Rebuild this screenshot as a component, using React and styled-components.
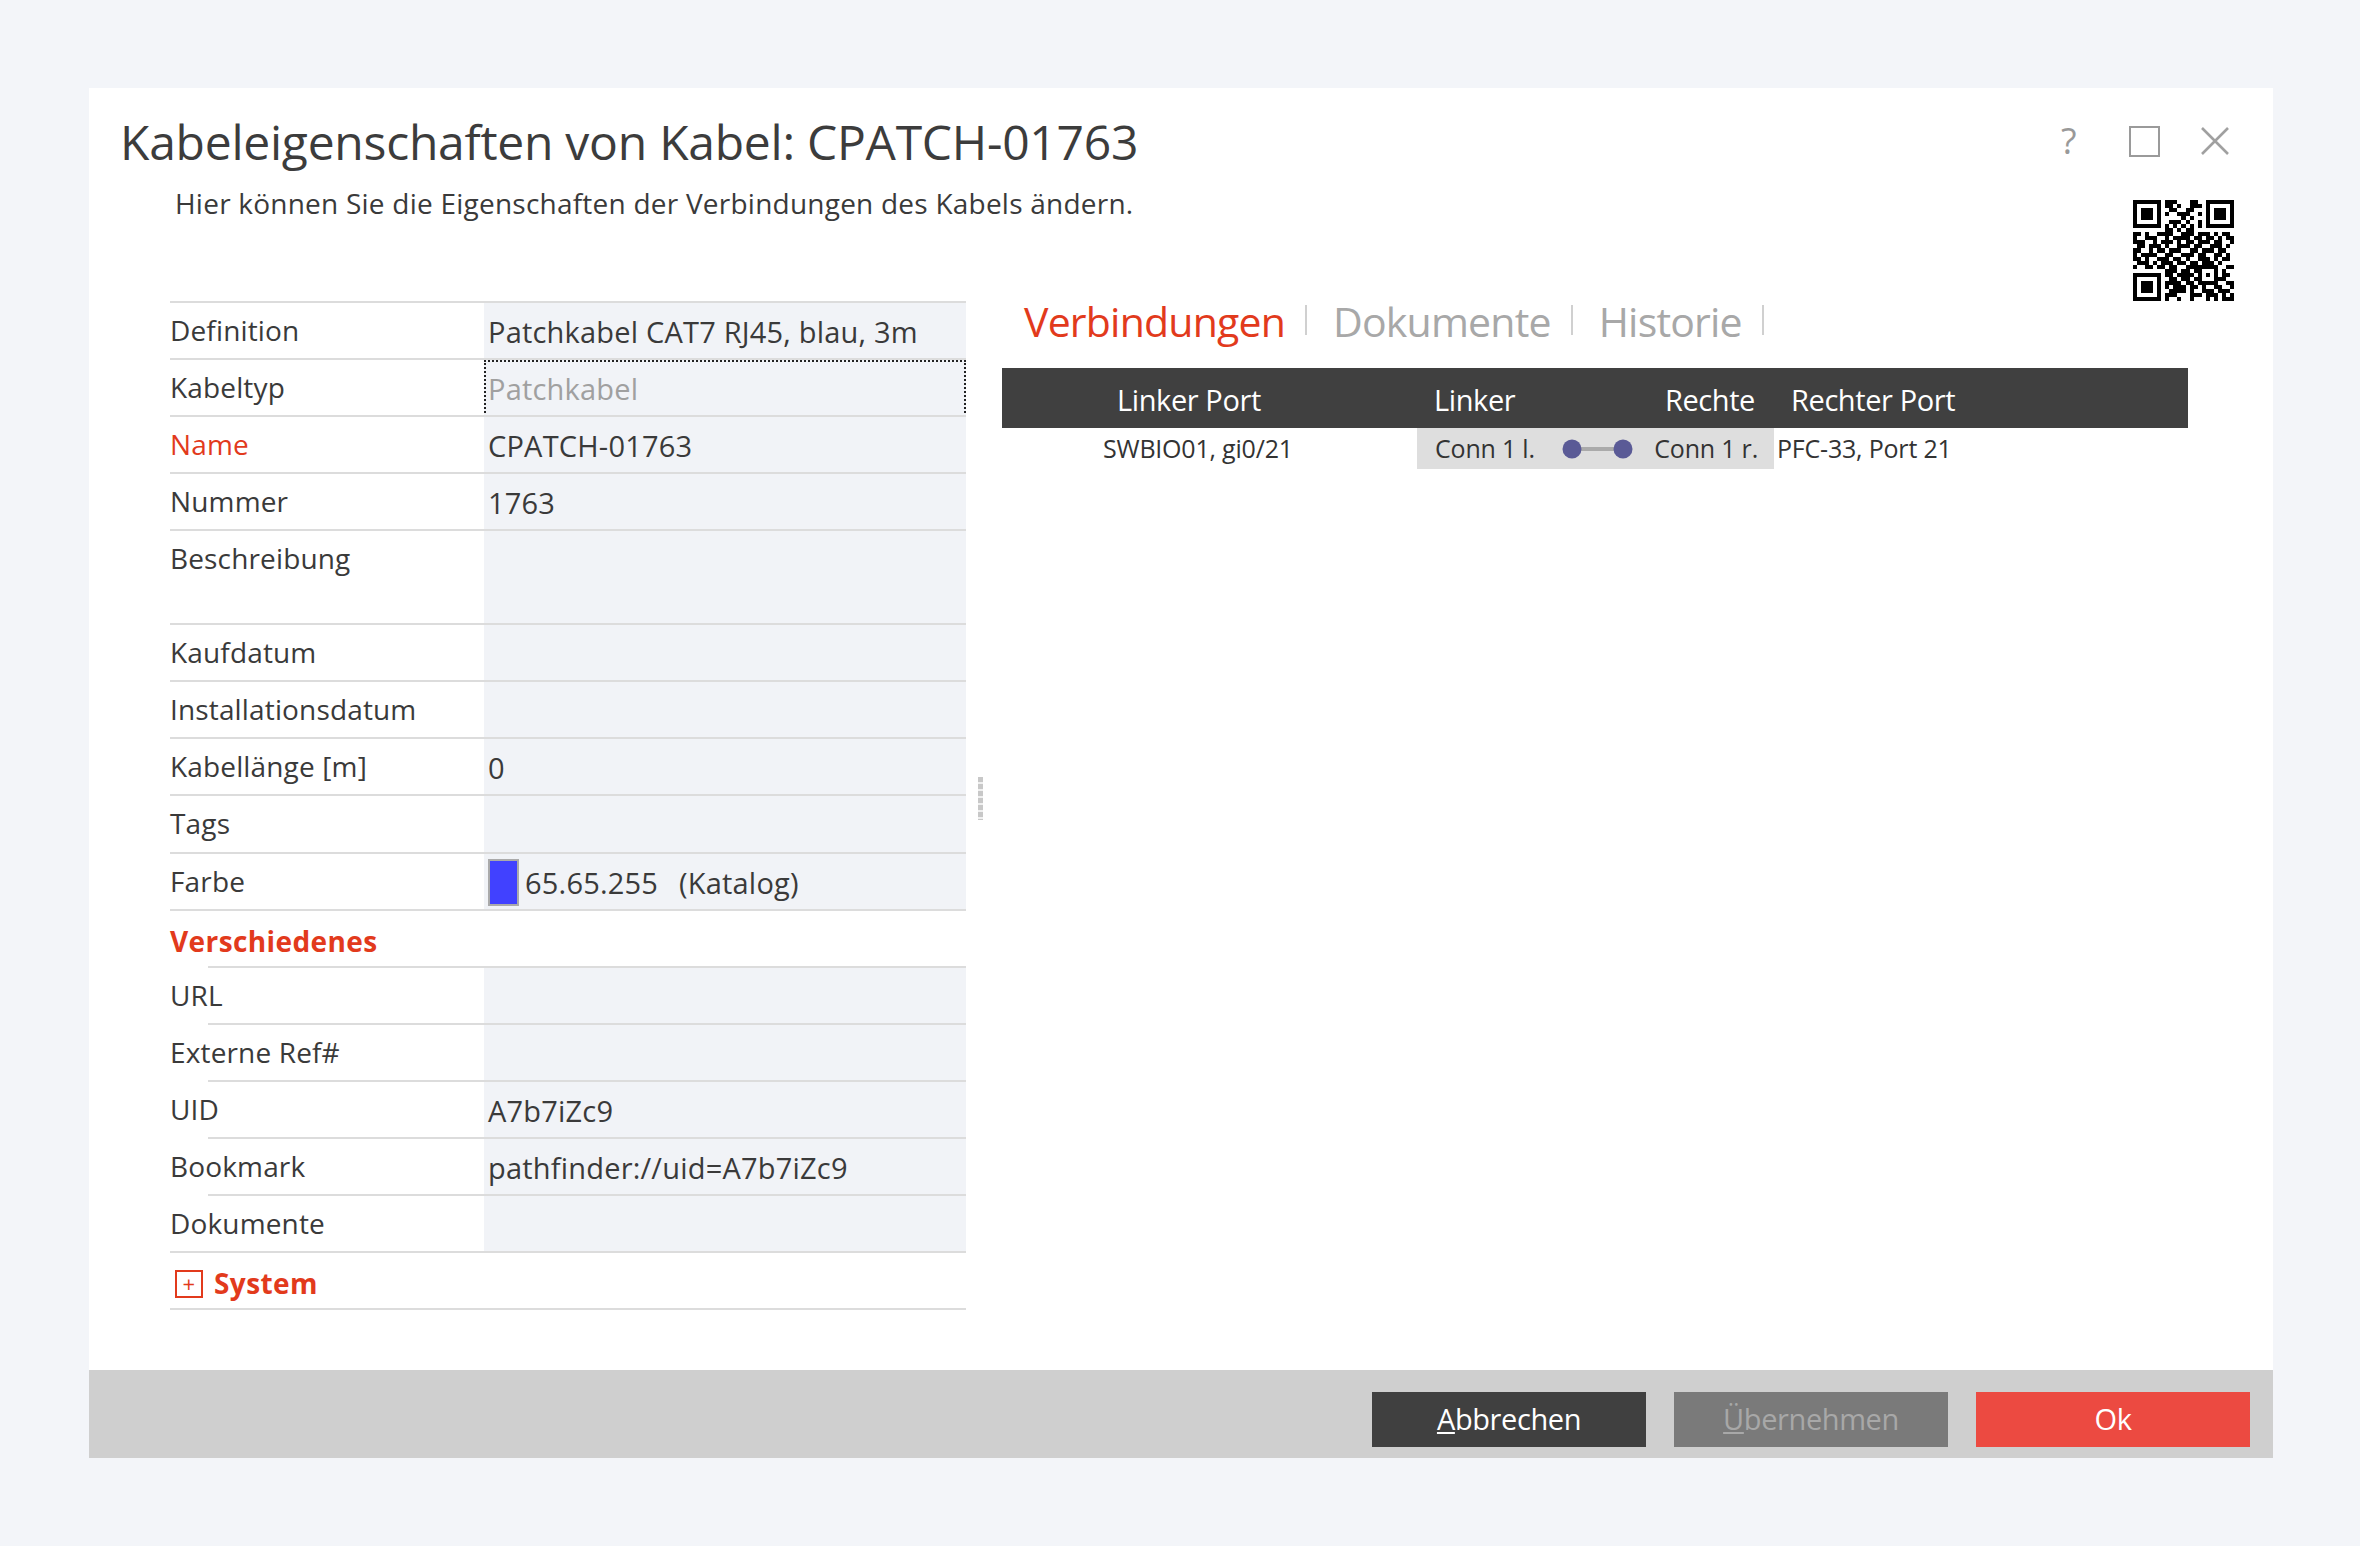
import styled, { createGlobalStyle } from 'styled-components';

const GlobalStyle = createGlobalStyle`
  html, body { margin: 0; padding: 0; background: #f3f5f9; }
  body { font-family: 'Open Sans', 'Noto Sans', sans-serif; color: #3a3a3a; }
  * { box-sizing: border-box; }
`;

const QR_ROWS = [
  '1111111011100011001111111',
  '1000001011010011101000001',
  '1011101001100110001011101',
  '1011101010011100101011101',
  '1011101000001010001011101',
  '1000001001110100101000001',
  '1111111010101010101111111',
  '0000000011010110000000000',
  '1101001111001110111010110',
  '1001110010111101101101011',
  '1110010111010110111011001',
  '0110111010011101100111010',
  '1100101101110011011101100',
  '1011110011001110110011010',
  '1101001110110100111010110',
  '0111010111011011011101000',
  '1001101101100111111110011',
  '0000000011101101100010100',
  '1111111011011110101010110',
  '1000001001101101100011100',
  '1011101011110110111110011',
  '1011101010111011010011001',
  '1011101001111010011101110',
  '1000001011100011101110101',
  '1111111010010010001010111',
];

const QrCode = () => (
  <QrSvg viewBox="0 0 25 25" shapeRendering="crispEdges">
    {QR_ROWS.map((row, y) =>
      row.split('').map((c, x) => (c === '1' ? <rect key={x + '-' + y} x={x} y={y} width="1" height="1" fill="#000" /> : null))
    )}
  </QrSvg>
);

const Row = ({ label, children, height, inset, required, focus }) => (
  <PropRow $height={height} $inset={inset}>
    <Label $required={required}>{label}</Label>
    <Value $focus={focus}>{children}</Value>
  </PropRow>
);

export default function App() {
  return (
    <Page>
      <GlobalStyle />
      <Dialog>
        <Head>
          <HeadText>
            <Title>Kabeleigenschaften von Kabel: CPATCH-01763</Title>
            <Subtitle>Hier können Sie die Eigenschaften der Verbindungen des Kabels ändern.</Subtitle>
          </HeadText>
          <HeadTools>
            <WindowButtons>
              <HelpMark>?</HelpMark>
              <MaxBox />
              <CloseIcon viewBox="0 0 30 30">
                <path d="M2 2 L28 28 M28 2 L2 28" stroke="#a0a0a0" strokeWidth="2.6" fill="none" />
              </CloseIcon>
            </WindowButtons>
            <QrCode />
          </HeadTools>
        </Head>

        <Body>
          <PropsPanel>
            <Row label="Definition">Patchkabel CAT7 RJ45, blau, 3m</Row>
            <Row label="Kabeltyp" focus><Muted>Patchkabel</Muted></Row>
            <Row label="Name" required>CPATCH-01763</Row>
            <Row label="Nummer">1763</Row>
            <Row label="Beschreibung" height={94} />
            <Row label="Kaufdatum" />
            <Row label="Installationsdatum" />
            <Row label="Kabellänge [m]">0</Row>
            <Row label="Tags" height={58} />
            <Row label="Farbe">
              <Swatch />
              <ColorText>65.65.255</ColorText>
              <ColorSource>(Katalog)</ColorSource>
            </Row>
            <SectionRow $inset>Verschiedenes</SectionRow>
            <Row label="URL" inset />
            <Row label="Externe Ref#" inset />
            <Row label="UID" inset>A7b7iZc9</Row>
            <Row label="Bookmark" inset>pathfinder://uid=A7b7iZc9</Row>
            <Row label="Dokumente" />
            <SectionRow>
              <PlusBox>+</PlusBox>
              System
            </SectionRow>
          </PropsPanel>

          <Splitter><Grip /></Splitter>

          <ConnectionsPanel>
            <Tabs>
              <Tab $active>Verbindungen</Tab>
              <Tab>Dokumente</Tab>
              <Tab>Historie</Tab>
            </Tabs>
            <TableHead>
              <HeadPort>Linker Port</HeadPort>
              <HeadConn>
                <span>Linker</span>
                <span>Rechte</span>
              </HeadConn>
              <HeadRight>Rechter Port</HeadRight>
            </TableHead>
            <TableRow>
              <LeftPort>SWBIO01, gi0/21</LeftPort>
              <ConnCell>
                <span>Conn 1 l.</span>
                <LinkIcon viewBox="0 0 72 20">
                  <rect x="10" y="8" width="52" height="4" fill="#aaaaaa" />
                  <circle cx="10" cy="10" r="9.5" fill="#5a5a96" />
                  <circle cx="61" cy="10" r="9.5" fill="#5a5a96" />
                </LinkIcon>
                <span>Conn 1 r.</span>
              </ConnCell>
              <RightPort>PFC-33, Port 21</RightPort>
            </TableRow>
          </ConnectionsPanel>
        </Body>

        <Footer>
          <ActionButton $kind="cancel"><u>A</u>bbrechen</ActionButton>
          <ActionButton $kind="apply"><u>Ü</u>bernehmen</ActionButton>
          <ActionButton $kind="ok">Ok</ActionButton>
        </Footer>
      </Dialog>
    </Page>
  );
}

const Page = styled.div`
  width: 2360px;
  height: 1546px;
  padding: 88px 87px 88px 89px;
`;
const Dialog = styled.div`
  width: 2184px;
  height: 1370px;
  background: #fff;
  display: flex;
  flex-direction: column;
`;
const Head = styled.div`
  height: 213px;
  flex: none;
  display: flex;
  justify-content: space-between;
`;
const HeadText = styled.div`
  padding: 24px 0 0 31px;
`;
const Title = styled.div`
  font-size: 48px;
  line-height: 60px;
  letter-spacing: -0.25px;
  color: #3c3c3c;
  white-space: nowrap;
`;
const Subtitle = styled.div`
  margin: 11px 0 0 55px;
  font-size: 28px;
  line-height: 40px;
  letter-spacing: 0.23px;
  color: #3a3a3a;
  white-space: nowrap;
`;
const HeadTools = styled.div`
  width: 260px;
  padding: 36px 39px 0 0;
  display: flex;
  flex-direction: column;
  align-items: flex-end;
`;
const WindowButtons = styled.div`
  display: flex;
  align-items: center;
  gap: 40px;
  height: 34px;
  margin-right: 4px;
`;
const HelpMark = styled.span`
  font-size: 36px;
  line-height: 34px;
  color: #999999;
  width: 28px;
`;
const MaxBox = styled.span`
  width: 31px;
  height: 31px;
  border: 2px solid #9a9a9a;
`;
const CloseIcon = styled.svg`
  width: 30px;
  height: 30px;
`;
const QrSvg = styled.svg`
  width: 101px;
  height: 101px;
  margin: 42px 0 0 0;
`;
const Body = styled.div`
  flex: 1;
  display: flex;
  min-height: 0;
`;
const PropsPanel = styled.div`
  width: 877px;
  padding-left: 81px;
  flex: none;
  &::before {
    content: '';
    display: block;
    height: 2px;
    background: #dcdcdc;
  }
`;
const PropRow = styled.div`
  height: ${(p) => p.$height || 57}px;
  display: flex;
  position: relative;
  &::after {
    content: '';
    position: absolute;
    bottom: 0;
    right: 0;
    left: ${(p) => (p.$inset ? '38px' : '0')};
    height: 2px;
    background: #dcdcdc;
  }
`;
const Label = styled.div`
  width: 314px;
  flex: none;
  font-size: 28px;
  line-height: 54px;
  letter-spacing: 0.15px;
  color: ${(p) => (p.$required ? '#e23a1c' : '#3a3a3a')};
`;
const Value = styled.div`
  flex: 1;
  background: #f1f3f7;
  padding: 2px 0 0 4px;
  font-size: 29px;
  line-height: 54px;
  letter-spacing: 0.2px;
  color: #3a3a3a;
  display: flex;
  align-items: flex-start;
  white-space: nowrap;
  ${(p) => (p.$focus ? 'outline: 2px dotted #222; outline-offset: -2px;' : '')}
`;
const Muted = styled.span`
  color: #a0a0a0;
`;
const Swatch = styled.span`
  width: 31px;
  height: 47px;
  margin-top: 3px;
  margin-right: 6px;
  background: #4141ff;
  border: 2px solid #aaaaaa;
  flex: none;
`;
const ColorText = styled.span`
  width: 154px;
`;
const ColorSource = styled.span``;
const SectionRow = styled.div`
  height: 57px;
  display: flex;
  align-items: center;
  padding-top: 2px;
  font-size: 28px;
  font-weight: 700;
  letter-spacing: 0.4px;
  color: #e23a1c;
  position: relative;
  &::after {
    content: '';
    position: absolute;
    bottom: 0;
    right: 0;
    left: ${(p) => (p.$inset ? '38px' : '0')};
    height: 2px;
    background: #dcdcdc;
  }
`;
const PlusBox = styled.span`
  width: 28px;
  height: 28px;
  margin: 2px 11px 0 5px;
  border: 2px solid #e23a1c;
  font-size: 22px;
  line-height: 22px;
  font-weight: 400;
  text-align: center;
`;
const Splitter = styled.div`
  width: 36px;
  flex: none;
  padding: 476px 0 0 12px;
`;
const Grip = styled.div`
  width: 5px;
  height: 43px;
  background: repeating-linear-gradient(to bottom, #c8c8c8 0, #c8c8c8 5px, #f0f0f0 5px, #f0f0f0 7px);
`;
const ConnectionsPanel = styled.div`
  width: 1186px;
  flex: none;
`;
const Tabs = styled.div`
  height: 67px;
  display: flex;
  align-items: flex-start;
  padding-left: 22px;
`;
const Tab = styled.div`
  font-size: 41px;
  line-height: 40px;
  letter-spacing: -0.8px;
  color: ${(p) => (p.$active ? '#e23a1c' : '#a8a8a8')};
  padding-right: 22px;
  margin-right: 26px;
  position: relative;
  &::after {
    content: '';
    position: absolute;
    right: 0;
    top: 4px;
    height: 30px;
    width: 2px;
    background: #d0d0d0;
  }
`;
const TableHead = styled.div`
  height: 60px;
  background: #404040;
  display: grid;
  grid-template-columns: 415px 357px 1fr;
  align-items: center;
  padding-top: 2px;
  color: #fff;
  font-size: 29px;
  letter-spacing: -0.4px;
`;
const HeadPort = styled.div`
  padding-left: 115px;
`;
const HeadConn = styled.div`
  display: flex;
  justify-content: space-between;
  padding: 0 19px 0 17px;
`;
const HeadRight = styled.div`
  padding-left: 17px;
`;
const TableRow = styled.div`
  height: 41px;
  display: grid;
  grid-template-columns: 415px 357px 1fr;
  font-size: 25px;
  letter-spacing: -0.2px;
  line-height: 41px;
  color: #333;
`;
const LeftPort = styled.div`
  padding-left: 101px;
`;
const ConnCell = styled.div`
  background: #dedede;
  display: flex;
  align-items: center;
  justify-content: space-between;
  padding: 0 16px 0 18px;
`;
const LinkIcon = styled.svg`
  width: 72px;
  height: 20px;
  margin-left: 6px;
  flex: none;
`;
const RightPort = styled.div`
  padding-left: 3px;
`;
const Footer = styled.div`
  height: 88px;
  flex: none;
  background: #cfcfcf;
  display: flex;
  justify-content: flex-end;
  gap: 28px;
  padding: 22px 23px 11px 0;
`;
const ActionButton = styled.div`
  width: 274px;
  height: 55px;
  display: flex;
  align-items: center;
  justify-content: center;
  padding-bottom: 2px;
  font-size: 29px;
  letter-spacing: -0.4px;
  white-space: pre;
  background: ${(p) => (p.$kind === 'cancel' ? '#404040' : p.$kind === 'apply' ? '#7a7a7a' : '#ec4a41')};
  color: ${(p) => (p.$kind === 'apply' ? '#a8a8a8' : '#fff')};
`;
